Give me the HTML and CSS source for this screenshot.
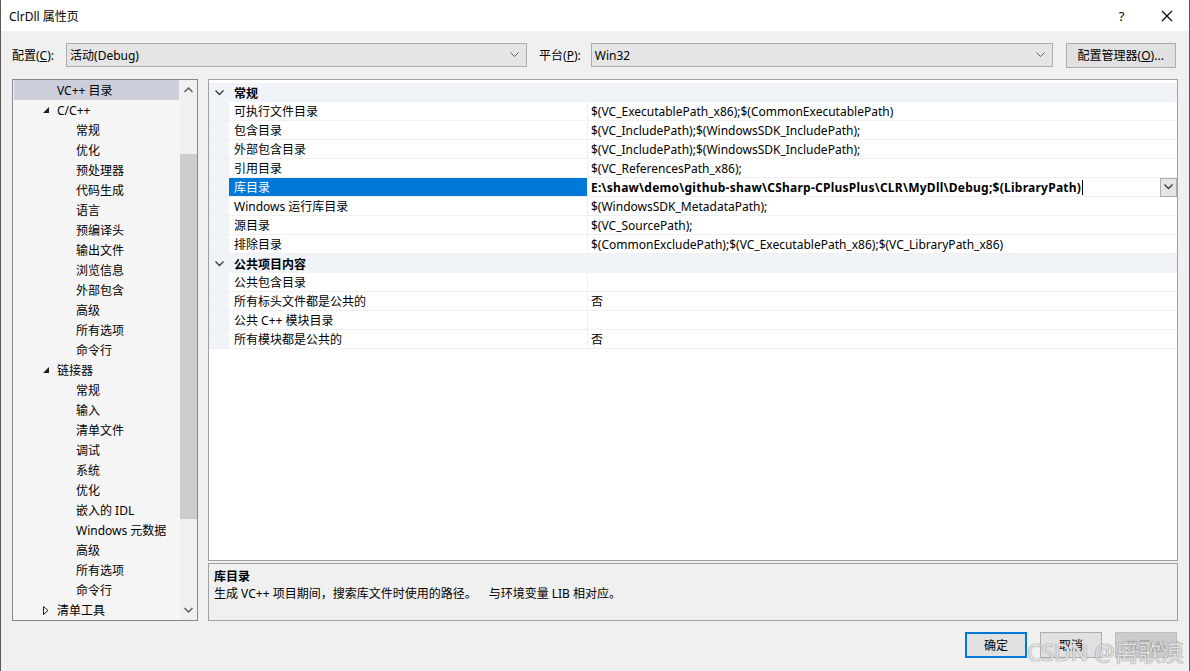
FILE: index.html
```html
<!DOCTYPE html>
<html lang="zh-CN">
<head>
    <meta charset="UTF-8">
    <title>ClrDll 属性页</title>
    <link rel="stylesheet" href="styles.css">
</head>
<body>
<div class="window">
    <div class="title-bar">
        <span class="title">ClrDll 属性页</span>
        <span class="title-btn help">?</span>
        <span class="title-btn close">
            <svg width="12" height="12" viewBox="0 0 12 12"><path d="M1 1 L11 11 M11 1 L1 11" stroke="#000" stroke-width="1.1" fill="none"/></svg>
        </span>
    </div>

    <div class="config-row">
        <label class="config-label">配置(<u>C</u>):</label>
        <div class="combo combo-config">
            <span>活动(Debug)</span>
            <svg class="chev" width="9" height="6" viewBox="0 0 9 6"><path d="M0.5 0.5 L4.5 4.5 L8.5 0.5" stroke="#606060" fill="none"/></svg>
        </div>
        <label class="config-label platform">平台(<u>P</u>):</label>
        <div class="combo combo-platform">
            <span>Win32</span>
            <svg class="chev" width="9" height="6" viewBox="0 0 9 6"><path d="M0.5 0.5 L4.5 4.5 L8.5 0.5" stroke="#606060" fill="none"/></svg>
        </div>
        <button class="btn btn-manager">配置管理器(<u>O</u>)...</button>
    </div>

    <div class="main">
        <div class="tree">
            <div class="tree-items" id="tree"></div>
            <div class="scrollbar">
                <svg class="arrow" width="9" height="6" viewBox="0 0 9 6"><path d="M0.5 5 L4.5 1 L8.5 5" stroke="#606060" stroke-width="1.5" fill="none"/></svg>
                <div class="track"><div class="thumb"></div></div>
                <svg class="arrow" width="9" height="6" viewBox="0 0 9 6"><path d="M0.5 1 L4.5 5 L8.5 1" stroke="#606060" stroke-width="1.5" fill="none"/></svg>
            </div>
        </div>

        <div class="right">
            <div class="grid" id="grid"></div>
            <div class="desc">
                <div class="desc-title">库目录</div>
                <div class="desc-text">生成 VC++ 项目期间，搜索库文件时使用的路径。&emsp;与环境变量 LIB 相对应。</div>
            </div>
        </div>
    </div>

    <div class="buttons">
        <button class="btn btn-ok">确定</button>
        <button class="btn">取消</button>
        <button class="btn disabled">应用(<u>A</u>)</button>
    </div>
    <div class="watermark">CSDN @离歌漠</div>
</div>

<script>
    // tree on the left: [level, text, state]
    const tree = [
        [1, "VC++ 目录", "sel"],
        [1, "C/C++", "open"],
        [2, "常规"], [2, "优化"], [2, "预处理器"], [2, "代码生成"], [2, "语言"], [2, "预编译头"],
        [2, "输出文件"], [2, "浏览信息"], [2, "外部包含"], [2, "高级"], [2, "所有选项"], [2, "命令行"],
        [1, "链接器", "open"],
        [2, "常规"], [2, "输入"], [2, "清单文件"], [2, "调试"], [2, "系统"], [2, "优化"], [2, "嵌入的 IDL"],
        [2, "Windows 元数据"], [2, "高级"], [2, "所有选项"], [2, "命令行"],
        [1, "清单工具", "closed"]
    ];

    const treeBox = document.getElementById("tree");
    tree.forEach(item => {
        let row = document.createElement("div");
        row.className = "tree-row level" + item[0] + (item[2] === "sel" ? " selected" : "");
        let icon = "";
        if (item[2] === "open") {
            icon = '<svg class="tw" width="6" height="6" viewBox="0 0 6 6"><path d="M6 0 L6 6 L0 6 Z" fill="#1e1e1e"/></svg>';
        } else if (item[2] === "closed") {
            icon = '<svg class="tw" width="6" height="9" viewBox="0 0 6 9"><path d="M0.5 0.5 L5 4.5 L0.5 8.5 Z" stroke="#1e1e1e" fill="none"/></svg>';
        }
        row.innerHTML = '<span class="tw-box">' + icon + '</span><span>' + item[1] + '</span>';
        treeBox.appendChild(row);
    });

    // property grid
    const groups = [
        { name: "常规", rows: [
            ["可执行文件目录", "$(VC_ExecutablePath_x86);$(CommonExecutablePath)"],
            ["包含目录", "$(VC_IncludePath);$(WindowsSDK_IncludePath);"],
            ["外部包含目录", "$(VC_IncludePath);$(WindowsSDK_IncludePath);"],
            ["引用目录", "$(VC_ReferencesPath_x86);"],
            ["库目录", "E:\\shaw\\demo\\github-shaw\\CSharp-CPlusPlus\\CLR\\MyDll\\Debug;$(LibraryPath)", true],
            ["Windows 运行库目录", "$(WindowsSDK_MetadataPath);"],
            ["源目录", "$(VC_SourcePath);"],
            ["排除目录", "$(CommonExcludePath);$(VC_ExecutablePath_x86);$(VC_LibraryPath_x86)"]
        ]},
        { name: "公共项目内容", rows: [
            ["公共包含目录", ""],
            ["所有标头文件都是公共的", "否"],
            ["公共 C++ 模块目录", ""],
            ["所有模块都是公共的", "否"]
        ]}
    ];

    const chevron = '<svg width="9" height="6" viewBox="0 0 9 6"><path d="M0.5 0.5 L4.5 4.5 L8.5 0.5" stroke="#3c3c3c" stroke-width="1.4" fill="none"/></svg>';
    const grid = document.getElementById("grid");
    groups.forEach(group => {
        let head = document.createElement("div");
        head.className = "group-row";
        head.innerHTML = '<span class="gutter">' + chevron + '</span><span class="group-name">' + group.name + '</span>';
        grid.appendChild(head);

        group.rows.forEach(r => {
            let row = document.createElement("div");
            row.className = "prop-row" + (r[2] ? " selected" : "");
            let value = '<span class="prop-value">' + r[1] + '</span>';
            if (r[2]) {
                value = '<span class="prop-value"><span class="edit">' + r[1] + '<i class="caret"></i></span>' +
                        '<span class="drop">' + chevron + '</span></span>';
            }
            row.innerHTML = '<span class="gutter"></span><span class="prop-name">' + r[0] + '</span>' + value;
            grid.appendChild(row);
        });
    });
</script>
</body>
</html>
```

FILE: styles.css
```css
* {
    box-sizing: border-box;
}
body {
    margin: 0;
    width: 1190px;
    height: 671px;
    overflow: hidden;
    font-family: "Segoe UI", "Noto Sans", "Noto Sans CJK SC", sans-serif;
    font-size: 12px;
    color: #000;
}
.window {
    position: relative;
    width: 1190px;
    height: 671px;
    background-color: #f0f0f0;
    border-left: 1px solid #5a5a5a;
    border-right: 1px solid #5a5a5a;
    display: flex;
    flex-direction: column;
}
.title-bar {
    height: 31px;
    background-color: #fff;
    display: flex;
    align-items: center;
    padding-left: 8px;
}
.title {
    flex-grow: 1;
    font-size: 12px;
}
.title-btn {
    width: 45px;
    text-align: center;
    font-size: 13px;
    display: flex;
    justify-content: center;
}
.config-row {
    display: flex;
    align-items: center;
    height: 24px;
    margin-top: 12px;
    padding-left: 11px;
}
.config-label {
    margin-right: 12px;
}
.config-label.platform {
    margin-left: 12px;
    margin-right: 10px;
}
.combo {
    height: 24px;
    background-color: #e5e5e5;
    border: 1px solid #adadad;
    display: flex;
    align-items: center;
    padding: 0 7px 0 3px;
}
.combo span {
    flex-grow: 1;
}
.combo-config {
    width: 461px;
}
.combo-platform {
    width: 462px;
}
.btn {
    font-family: inherit;
    font-size: 12px;
    height: 26px;
    background-color: #e1e1e1;
    border: 1px solid #adadad;
    color: #000;
    padding: 0;
}
.btn-manager {
    width: 110px;
    height: 25px;
    margin-left: 13px;
}
.main {
    display: flex;
    margin-top: 12px;
    padding-left: 11px;
    height: 542px;
}
.tree {
    width: 186px;
    border: 1px solid #828790;
    background-color: #f5f5f5;
    display: flex;
}
.tree-items {
    flex-grow: 1;
    padding: 0 1px;
}
.tree-row {
    height: 20px;
    display: flex;
    align-items: center;
    white-space: nowrap;
}
.tree-row.selected {
    background-color: #cccedb;
}
.tw-box {
    width: 13px;
    display: flex;
    align-items: center;
}
.level1 {
    padding-left: 29px;
}
.level1 .tw-box {
    width: 14px;
}
.level2 {
    padding-left: 62px;
}
.level2 .tw-box {
    display: none;
}
.scrollbar {
    width: 17px;
    background-color: #f0f0f0;
    display: flex;
    flex-direction: column;
    align-items: center;
}
.scrollbar .arrow {
    margin: 7px 0;
}
.track {
    flex-grow: 1;
    width: 100%;
    padding-top: 54px;
}
.thumb {
    height: 365px;
    background-color: #cdcdcd;
}
.right {
    margin-left: 10px;
    width: 970px;
    display: flex;
    flex-direction: column;
}
.grid {
    height: 482px;
    border: 1px solid #a0a0a0;
    background-color: #fff;
    padding-top: 3px;
}
.group-row,
.prop-row {
    height: 19px;
    display: flex;
    align-items: center;
    white-space: nowrap;
}
.group-row {
    background-color: #f0f4f9;
}
.gutter {
    width: 20px;
    height: 100%;
    background-color: #f0f4f9;
    display: flex;
    align-items: center;
    justify-content: center;
    padding-left: 1px;
}
.group-name {
    font-weight: bold;
    padding-left: 5px;
}
.prop-row {
    border-bottom: 1px solid #f0f0f0;
}
.prop-name {
    width: 359px;
    height: 100%;
    display: flex;
    align-items: center;
    padding-left: 5px;
    border-right: 1px solid #f0f0f0;
}
.prop-value {
    flex-grow: 1;
    height: 100%;
    display: flex;
    align-items: center;
    padding-left: 3px;
}
.prop-row.selected .prop-name {
    background-color: #0078d7;
    color: #fff;
}
.edit {
    flex-grow: 1;
    font-weight: bold;
    letter-spacing: 0.25px;
    display: flex;
    align-items: center;
}
.caret {
    width: 1px;
    height: 15px;
    background-color: #000;
    margin-left: 1px;
}
.drop {
    width: 17px;
    height: 19px;
    background-color: #e5e5e5;
    border: 1px solid #adadad;
    display: flex;
    align-items: center;
    justify-content: center;
}
.desc {
    margin-top: 2px;
    height: 58px;
    border: 1px solid #a0a0a0;
    padding: 4px 5px;
    line-height: 17px;
}
.desc-title {
    font-weight: bold;
}
.buttons {
    display: flex;
    justify-content: flex-end;
    gap: 13px;
    margin-top: 11px;
    padding-right: 12px;
}
.buttons .btn {
    width: 62px;
}
.btn-ok {
    border: 2px solid #0078d7;
}
.btn.disabled {
    color: #a0a0a0;
    background-color: #cccccc;
    border-color: #bfbfbf;
}
.watermark {
    position: absolute;
    right: 5px;
    bottom: 3px;
    font-size: 23px;
    color: rgba(255, 255, 255, 0.75);
    text-shadow: 0 0 1px #888, 0 0 1px #888;
    pointer-events: none;
}
```
